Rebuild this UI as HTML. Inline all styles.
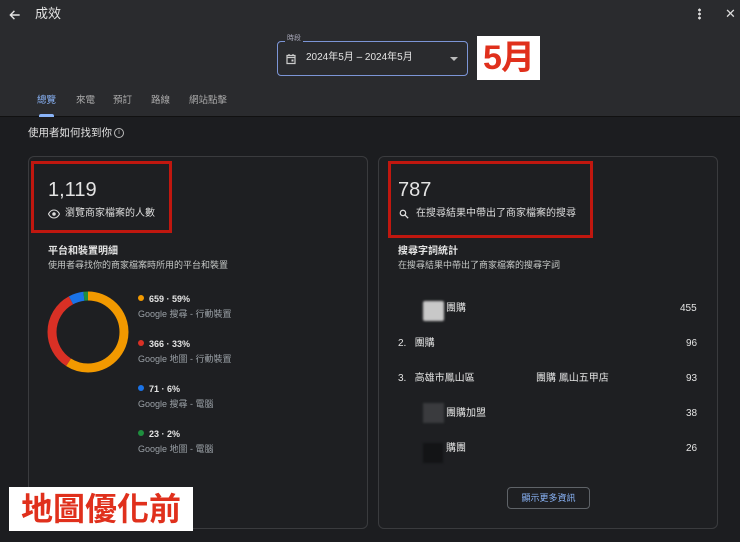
<!DOCTYPE html>
<html><head><meta charset="utf-8"><style>
*{margin:0;padding:0;box-sizing:border-box}
body{width:740px;height:542px;background:#1c1d20;font-family:"Liberation Sans","Noto Sans CJK TC",sans-serif;color:#e3e3e3;position:relative;overflow:hidden;line-height:1.2}
.hdr{position:absolute;left:0;top:0;width:740px;height:117px;background:#2a2b2e;border-bottom:1px solid #111}
.a{position:absolute}
.card{position:absolute;top:156px;width:340px;height:373px;border:1px solid #3a3b3e;border-radius:6px;background:#1e1f22}
.red{position:absolute;border:3px solid #c0170f}
.sm{font-size:10px;color:#c4c7c5}
.g{font-size:9px;color:#9aa0a6;line-height:12px}
.dot{display:inline-block;width:6px;height:6px;border-radius:50%;margin-right:5px;vertical-align:1px}
.row{position:absolute;font-size:10px;color:#e3e3e3;line-height:12px;height:12px}
</style></head><body>
<div class="hdr"></div>
<svg class="a" style="left:8px;top:8px" width="14" height="14" viewBox="0 0 24 24"><path d="M20 12H5M11 5l-7 7 7 7" stroke="#e3e3e3" stroke-width="2.4" fill="none"/></svg>
<div class="a" style="left:35px;top:6px;font-size:13px">成效</div>
<div class="a" style="left:698px;top:8px;width:3px;height:12px;background:radial-gradient(circle,#ddd 1.3px,transparent 1.5px) 0 0/3px 4px"></div>
<div class="a" style="left:725px;top:6px;font-size:13px;color:#ddd">✕</div>
<div class="a" style="left:277px;top:41px;width:191px;height:35px;border:1.5px solid #7c95d6;border-radius:4px"></div>
<div class="a" style="left:285px;top:35px;font-size:7px;color:#aab;background:#2a2b2e;padding:0 2px">時段</div>
<svg class="a" style="left:285px;top:53px" width="12" height="12" viewBox="0 0 24 24"><path d="M4 5h16v16H4zM4 9h16M8 2v4M16 2v4" stroke="#ccc" stroke-width="2.4" fill="none"/><rect x="13" y="13" width="4" height="4" fill="#ccc"/></svg>
<div class="a" style="left:306px;top:52px;font-size:10px;color:#e3e3e3">2024年5月 – 2024年5月</div>
<div class="a" style="left:450px;top:57px;width:0;height:0;border-left:4px solid transparent;border-right:4px solid transparent;border-top:4px solid #bbb"></div>
<div class="a" style="left:477px;top:36px;width:63px;height:44px;background:#fff;color:#e0301c;font-weight:bold;font-size:34px;line-height:44px;text-align:center;letter-spacing:-1px">5月</div>
<div class="a" style="left:37px;top:95px;font-size:9.5px;color:#8ab4f8">總覽</div>
<div class="a" style="left:39px;top:114px;width:15px;height:3px;background:#8ab4f8;border-radius:2px 2px 0 0"></div>
<div class="a" style="left:76px;top:95px;font-size:9.5px;color:#aaa">來電</div>
<div class="a" style="left:113px;top:95px;font-size:9.5px;color:#aaa">預訂</div>
<div class="a" style="left:151px;top:95px;font-size:9.5px;color:#aaa">路線</div>
<div class="a" style="left:189px;top:95px;font-size:9.5px;color:#aaa">網站點擊</div>
<div class="a" style="left:28px;top:127px;font-size:10.5px;color:#e3e3e3">使用者如何找到你</div>
<div class="a" style="left:114px;top:128px;width:10px;height:10px;border:1px solid #bbb;border-radius:50%;font-size:7px;text-align:center;line-height:8px;color:#bbb">i</div>

<div class="card" style="left:28px"></div>
<div class="card" style="left:378px"></div>
<div class="red" style="left:31px;top:161px;width:141px;height:72px"></div>
<div class="red" style="left:388px;top:161px;width:205px;height:77px"></div>
<div class="a" style="left:48px;top:178px;font-size:20px">1,119</div>
<svg class="a" style="left:48px;top:209px" width="12" height="10" viewBox="0 0 24 20"><path d="M1 10C4 4 8 2 12 2s8 2 11 8c-3 6-7 8-11 8S4 16 1 10z" stroke="#ddd" stroke-width="2.2" fill="none"/><circle cx="12" cy="10" r="3.5" fill="#ddd"/></svg>
<div class="a" style="left:65px;top:208px;font-size:10px;color:#ddd">瀏覽商家檔案的人數</div>
<div class="a" style="left:398px;top:178px;font-size:20px">787</div>
<svg class="a" style="left:399px;top:209px" width="10" height="10" viewBox="0 0 24 24"><circle cx="9.5" cy="9.5" r="6.5" stroke="#ddd" stroke-width="3" fill="none"/><path d="M14.5 14.5L22 22" stroke="#ddd" stroke-width="3.2"/></svg>
<div class="a" style="left:416px;top:208px;font-size:10px;color:#ddd">在搜尋結果中帶出了商家檔案的搜尋</div>

<div class="a" style="left:48px;top:246px;font-size:10px;font-weight:bold">平台和裝置明細</div>
<div class="a sm" style="left:48px;top:260px;font-size:9px">使用者尋找你的商家檔案時所用的平台和裝置</div>
<svg class="a" style="left:47px;top:291px" width="82" height="82" viewBox="0 0 82 82">
<g fill="none" stroke-width="9" transform="rotate(-90 41 41)">
<circle cx="41" cy="41" r="36" stroke="#f29900" stroke-dasharray="133.5 226.2"/>
<circle cx="41" cy="41" r="36" stroke="#d93025" stroke-dasharray="0 133.5 74.6 226.2"/>
<circle cx="41" cy="41" r="36" stroke="#1a73e8" stroke-dasharray="0 208.1 13.6 226.2"/>
<circle cx="41" cy="41" r="36" stroke="#1e8e3e" stroke-dasharray="0 221.7 4.5 226.2"/>
</g></svg>
<div class="row" style="left:138px;top:293px;font-size:9px;font-weight:bold"><span class="dot" style="background:#f29900"></span>659 · 59%</div>
<div class="a g" style="left:138px;top:308px">Google 搜尋 - 行動裝置</div>
<div class="row" style="left:138px;top:338px;font-size:9px;font-weight:bold"><span class="dot" style="background:#d93025"></span>366 · 33%</div>
<div class="a g" style="left:138px;top:353px">Google 地圖 - 行動裝置</div>
<div class="row" style="left:138px;top:383px;font-size:9px;font-weight:bold"><span class="dot" style="background:#1a73e8"></span>71 · 6%</div>
<div class="a g" style="left:138px;top:398px">Google 搜尋 - 電腦</div>
<div class="row" style="left:138px;top:428px;font-size:9px;font-weight:bold"><span class="dot" style="background:#1e8e3e"></span>23 · 2%</div>
<div class="a g" style="left:138px;top:443px">Google 地圖 - 電腦</div>
<div class="a" style="left:9px;top:487px;width:184px;height:44px;background:#fff;color:#e0301c;font-weight:bold;font-size:32px;line-height:44px;text-align:center">地圖優化前</div>

<div class="a" style="left:398px;top:246px;font-size:10px;font-weight:bold">搜尋字詞統計</div>
<div class="a sm" style="left:398px;top:260px;font-size:9px">在搜尋結果中帶出了商家檔案的搜尋字詞</div>
<div class="a" style="left:423px;top:301px;width:21px;height:20px;background:#c8c8c8;border-radius:2px;filter:blur(1px)"></div>
<div class="row" style="left:446px;top:303px">團購</div><div class="row" style="left:680px;top:303px">455</div>
<div class="row" style="left:398px;top:338px">2.&nbsp;&nbsp;&nbsp;團購</div><div class="row" style="left:686px;top:338px">96</div>
<div class="row" style="left:398px;top:373px">3.&nbsp;&nbsp;&nbsp;高雄市鳳山區</div><div class="row" style="left:536px;top:373px">團購 鳳山五甲店</div><div class="row" style="left:686px;top:373px">93</div>
<div class="a" style="left:423px;top:403px;width:21px;height:20px;background:#3a3b3e;filter:blur(1px)"></div>
<div class="row" style="left:446px;top:408px">團購加盟</div><div class="row" style="left:686px;top:408px">38</div>
<div class="a" style="left:423px;top:443px;width:20px;height:20px;background:#131416;filter:blur(1px)"></div>
<div class="row" style="left:446px;top:443px">購團</div><div class="row" style="left:686px;top:443px">26</div>
<div class="a" style="left:507px;top:487px;width:83px;height:22px;border:1px solid #5f6368;border-radius:4px;font-size:9px;color:#8ab4f8;text-align:center;line-height:20px">顯示更多資訊</div>
</body></html>
